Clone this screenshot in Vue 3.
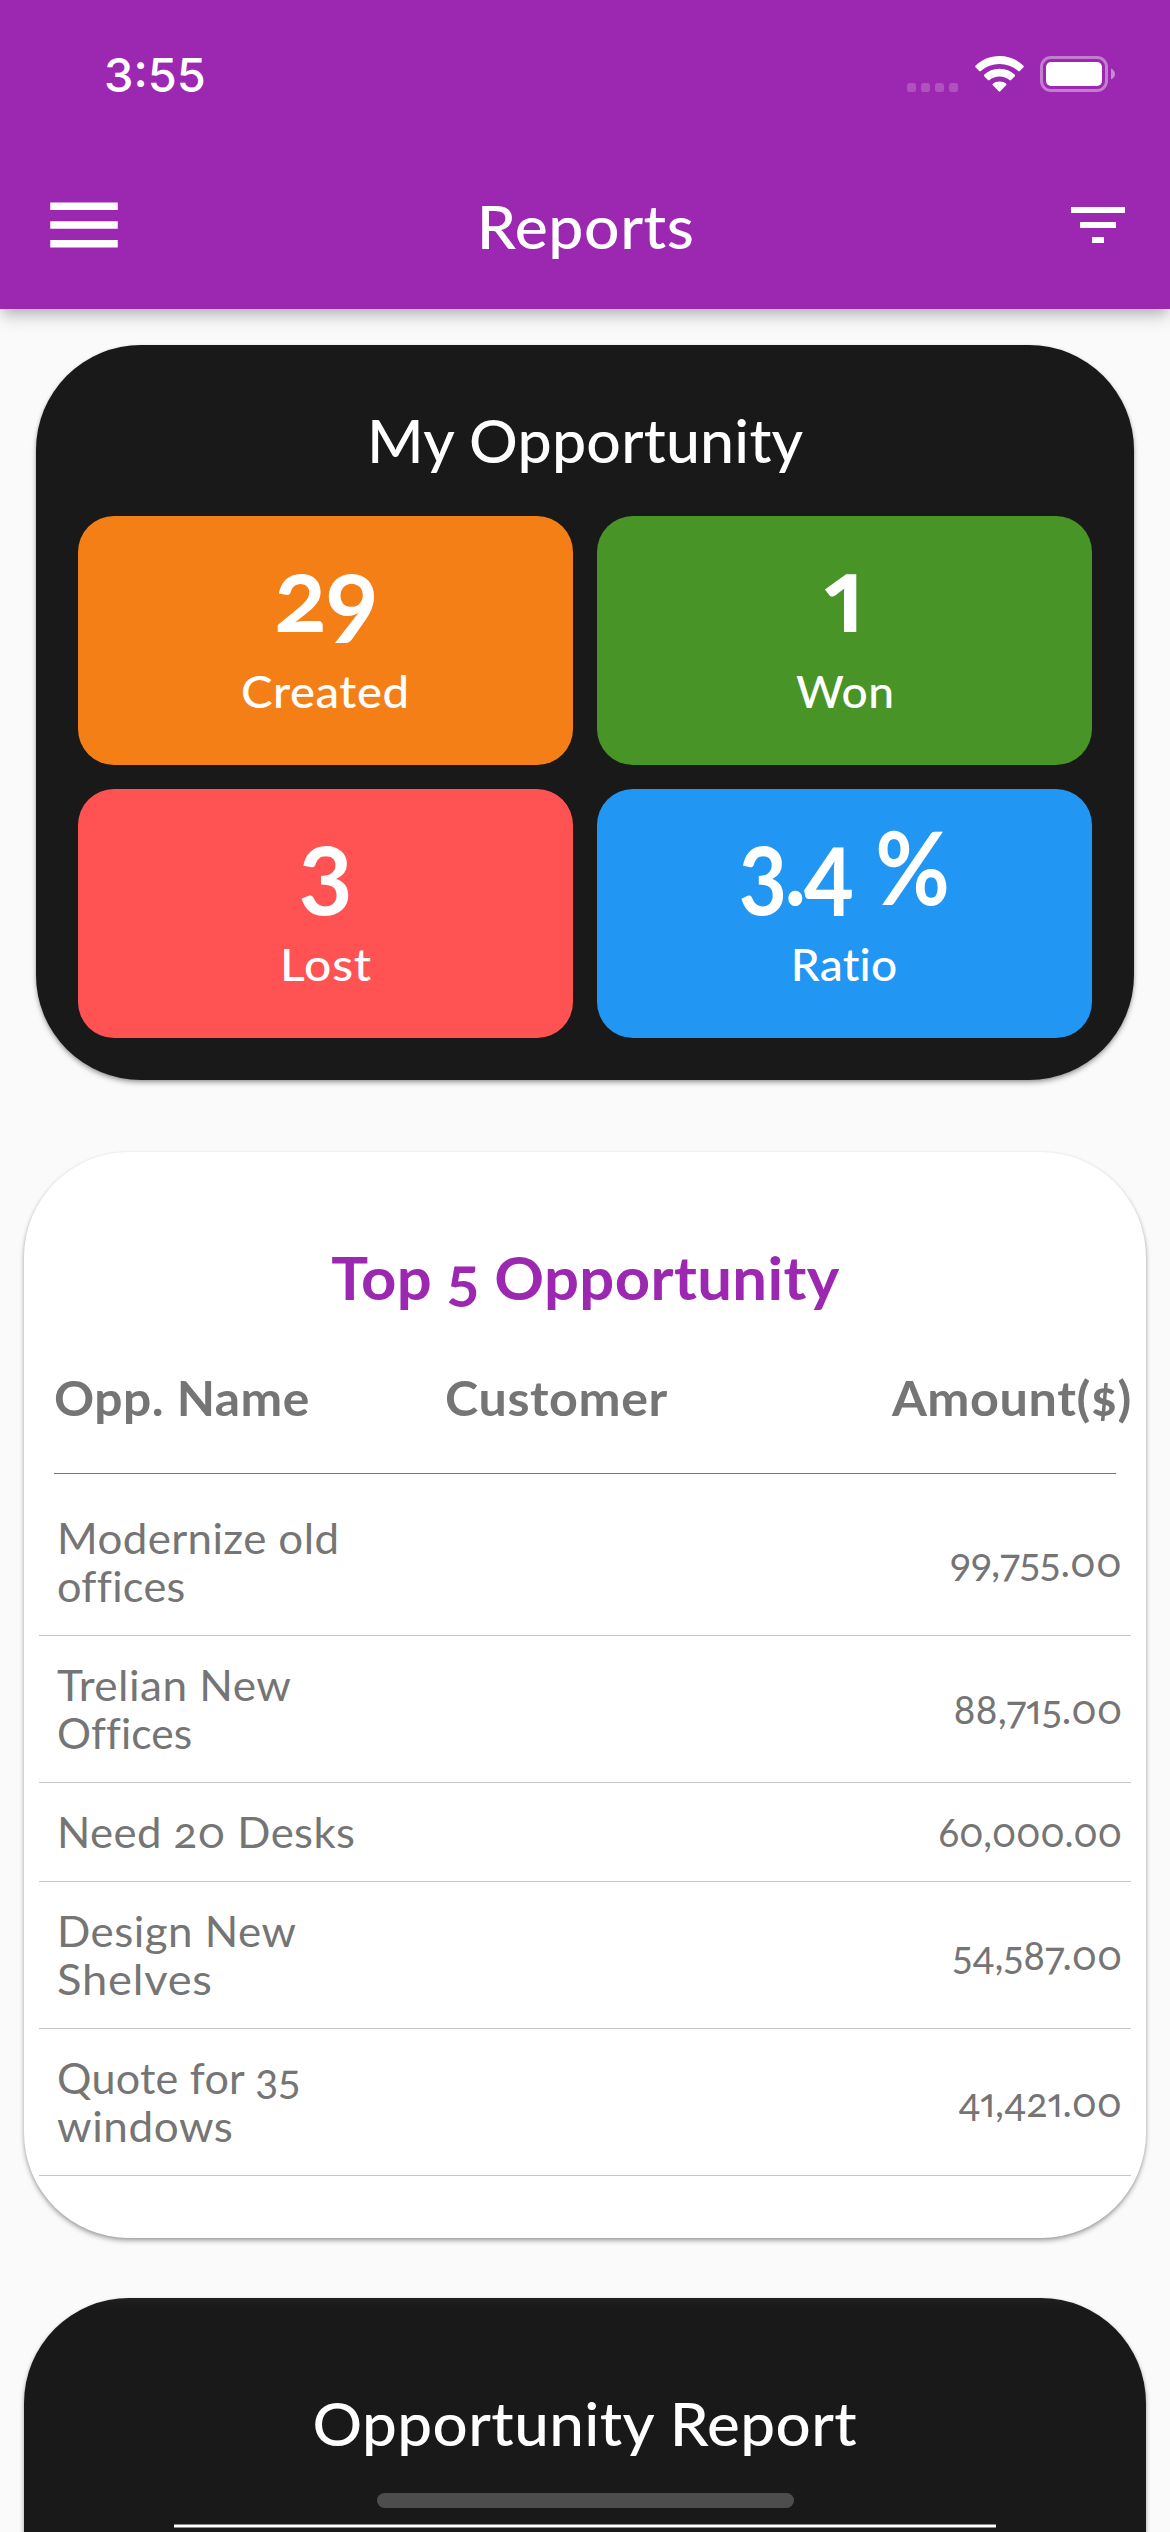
<script setup>
const tiles = [
  { value: '29', label: 'Created', tone: 'orange', vw: 97, lw: 165 },
  { value: '1', label: 'Won', tone: 'green', vw: 40, lw: 95 },
  { value: '3', label: 'Lost', tone: 'red', vw: 48, lw: 88 },
  { value: '3.4 %', label: 'Ratio', tone: 'blue', vw: 204, lw: 104 },
]

const rows = [
  { name: [['Modernize old', 279], ['offices', 123]], amount: '99,755.00', w: 169 },
  { name: [['Trelian New', 231], ['Offices', 130]], amount: '88,715.00', w: 166 },
  { name: [['Need 20 Desks', 295]], amount: '60,000.00', w: 181 },
  { name: [['Design New', 236], ['Shelves', 152]], amount: '54,587.00', w: 167 },
  { name: [['Quote for 35', 240], ['windows', 173]], amount: '41,421.00', w: 161 },
]

// Widens a label to the given width, partly by stretch and partly by tracking.
const vTrack = {
  mounted(el, { value }) {
    const count = el.textContent.length
    if (count < 2) return
    const size = parseFloat(getComputedStyle(el).fontSize)
    const natural = el.getBoundingClientRect().width
    const target = value + size * 0.07
    const scale = 1 + (target / natural - 1) * 0.7
    const gap = (target / scale - natural) / (count - 1)
    el.style.letterSpacing = `${gap}px`
    el.style.marginRight = `${-gap}px`
    el.style.transform = `scaleX(${scale})`
  },
}
</script>

<template>
  <div class="screen">
    <header class="appbar">
      <div class="status">
        <span class="time">3:55</span>
        <div class="indicators">
          <svg class="dots" width="51" height="9" viewBox="0 0 51 9">
            <rect v-for="n in 4" :key="n" :x="(n - 1) * 14" width="9" height="9" rx="2.5" />
          </svg>
          <svg class="wifi" width="49" height="36" viewBox="0 0 49 36">
            <path d="M24.500 0C34 0 42.500 3.800 48.300 9.600Q49.200 10.500 48.300 11.500L44.700 15.100Q44 15.800 43.200 15Q35.300 7.900 24.500 7.900T5.800 15Q5 15.800 4.300 15.100L.7 11.500Q-.2 10.500.7 9.600C6.500 3.800 15 0 24.500 0Z" />
            <path d="M24.500 12.800C30.700 12.800 35.900 15 39.700 18.600Q40.500 19.500 39.700 20.400L36 24.100Q35.300 24.700 34.500 24Q30.300 20.400 24.500 20.400T14.500 24Q13.700 24.700 13 24.100L9.300 20.400Q8.500 19.500 9.300 18.600C13.100 15 18.300 12.800 24.500 12.800Z" />
            <path d="M24.500 25.400C27.300 25.400 29.400 26.300 31.100 27.700Q31.900 28.500 31.100 29.300L25.300 35.300Q24.500 36.100 23.700 35.300L17.900 29.300Q17.100 28.500 17.900 27.700C19.600 26.300 21.700 25.400 24.500 25.400Z" />
          </svg>
          <svg class="battery" width="75" height="36" viewBox="0 0 75 36">
            <rect class="shell" x="1.500" y="1.500" width="65" height="33" rx="9.500" />
            <rect x="6" y="6" width="56" height="24" rx="5" />
            <path class="cap" d="M71 12.500C73.500 13.500 75 15.500 75 18S73.500 22.500 71 23.500Z" />
          </svg>
        </div>
      </div>
      <div class="toolbar">
        <svg class="menu" width="90" height="90" viewBox="0 0 24 24">
          <path d="M3 18h18v-2H3v2zm0-5h18v-2H3v2zm0-7v2h18V6H3z" />
        </svg>
        <h1 class="title"><span v-track="213">Reports</span></h1>
        <svg class="filter" width="72" height="72" viewBox="0 0 24 24">
          <path d="M10 18h4v-2h-4v2zM3 6v2h18V6H3zm3 7h12v-2H6v2z" />
        </svg>
      </div>
    </header>

    <main>
      <section class="card dark summary">
        <h2 class="title"><span v-track="432">My Opportunity</span></h2>
        <div class="tiles">
          <div v-for="t in tiles" :key="t.label" class="tile" :class="t.tone">
            <strong class="value"><span v-track="t.vw">{{ t.value }}</span></strong>
            <span class="label"><span v-track="t.lw">{{ t.label }}</span></span>
          </div>
        </div>
      </section>

      <section class="card top">
        <h2 class="title accent"><span v-track="504">Top 5 Opportunity</span></h2>
        <div class="heads">
          <div><span v-track="252">Opp. Name</span></div>
          <div><span v-track="219">Customer</span></div>
          <div class="end"><span v-track="236">Amount($)</span></div>
        </div>
        <div class="rule"></div>
        <div class="rows">
          <div v-for="r in rows" :key="r.amount" class="row">
            <div class="name">
              <div v-for="l in r.name" :key="l[0]"><span v-track="l[1]">{{ l[0] }}</span></div>
            </div>
            <div class="amount"><span v-track="r.w">{{ r.amount }}</span></div>
          </div>
        </div>
      </section>

      <section class="card dark report">
        <h2 class="title"><span v-track="540">Opportunity Report</span></h2>
        <div class="axis"></div>
      </section>
    </main>
    <div class="home"></div>
  </div>
</template>

<style>
body {
  margin: 0;
  background: #fafafa;
}
</style>

<style scoped>
.screen {
  position: relative;
  display: flex;
  flex-direction: column;
  width: 1170px;
  height: 2532px;
  overflow: hidden;
  background: #fafafa;
  font-family: Lato, "Open Sans", sans-serif;
  font-variant-numeric: oldstyle-nums proportional-nums;
}
span {
  display: inline-block;
  white-space: pre;
}
svg {
  display: block;
  fill: #fff;
}
.appbar {
  flex: none;
  height: 309px;
  background: #9c27b0;
  box-shadow: 0 6px 12px -3px rgba(0, 0, 0, 0.22), 0 12px 15px rgba(0, 0, 0, 0.07), 0 3px 24px rgba(0, 0, 0, 0.06);
}
.status {
  display: flex;
  justify-content: space-between;
  height: 141px;
  box-sizing: border-box;
  padding: 46px 55px 0 104px;
  color: #fff;
}
.time {
  font: 500 47px/57px Inter, sans-serif;
  letter-spacing: 0;
}
.indicators {
  display: flex;
  height: 36px;
  margin-top: 9.500px;
  align-items: flex-end;
}
.dots {
  fill: rgba(255, 255, 255, 0.2);
  margin-right: 17px;
}
.wifi {
  margin-right: 16px;
}
.shell {
  fill: none;
  stroke: rgba(255, 255, 255, 0.4);
  stroke-width: 3;
}
.cap {
  fill: rgba(255, 255, 255, 0.45);
}
.toolbar {
  display: flex;
  align-items: center;
  justify-content: space-between;
  height: 168px;
  padding: 0 36px 0 39px;
}
.menu {
  margin-right: -20px;
}
.title {
  margin: 0;
  height: 72px;
  color: #fff;
  font-size: 60px;
  font-weight: 500;
  line-height: 74px;
  text-align: center;
}
.card {
  border-radius: 105px;
  background: #fff;
  box-shadow: 0 3px 5px rgba(0, 0, 0, 0.3), 0 1px 3px rgba(0, 0, 0, 0.12);
}
.dark {
  background: #191919;
}
.summary {
  height: 735px;
  box-sizing: border-box;
  margin: 36px 36px 0;
  padding: 58px 42px 42px;
}
.tiles {
  display: grid;
  grid-template-columns: 1fr 1fr;
  gap: 24px;
  margin-top: 41px;
}
.tile {
  display: flex;
  flex-direction: column;
  align-items: center;
  height: 249px;
  box-sizing: border-box;
  padding-top: 21px;
  border-radius: 36px;
  color: #fff;
}
.orange { background: #f57f17; }
.green { background: #489426; }
.red { background: #ff5252; }
.blue { background: #2196f3; }
.value {
  font-size: 102px;
  font-weight: 700;
  line-height: 112px;
  word-spacing: 5px;
}
.label {
  margin-top: 15px;
  font-size: 45px;
  font-weight: 500;
  line-height: 54px;
}
.top {
  height: 1086px;
  box-sizing: border-box;
  margin: 72px 24px 0;
  padding-top: 88px;
}
.accent {
  color: #9c27b0;
  font-weight: 700;
}
.heads {
  display: grid;
  grid-template-columns: 391px 1fr auto;
  margin: 57px 15px 0 30px;
  color: #757575;
  font-size: 48px;
  font-weight: 700;
  line-height: 58px;
}
.heads span,
.name span {
  transform-origin: left;
}
.heads .end span,
.amount span {
  transform-origin: right;
}
.rule {
  height: 1px;
  margin: 46px 30px 15px;
  background: #757575;
}
.rows {
  margin: 0 15px;
  color: #757575;
}
.row {
  display: flex;
  align-items: center;
  justify-content: space-between;
  padding: 25px 9px 25px 18px;
  border-bottom: 1px solid #c6c6c6;
}
.name {
  font-size: 42px;
  line-height: 48px;
}
.name > div {
  height: 48px;
}
.amount {
  font-size: 40px;
  line-height: 48px;
}
.report {
  height: 600px;
  box-sizing: border-box;
  margin: 60px 24px 0;
  padding-top: 88px;
  background: linear-gradient(#202020, #191919 8px);
}
.axis {
  height: 2px;
  margin: 66px 150px 0;
  border: solid #8c8a8c;
  border-width: 1px 0;
  background: #fff;
}
.home {
  position: absolute;
  left: 377px;
  top: 2493px;
  width: 417px;
  height: 15px;
  border-radius: 8px;
  background: #4d4d4d;
}
</style>
